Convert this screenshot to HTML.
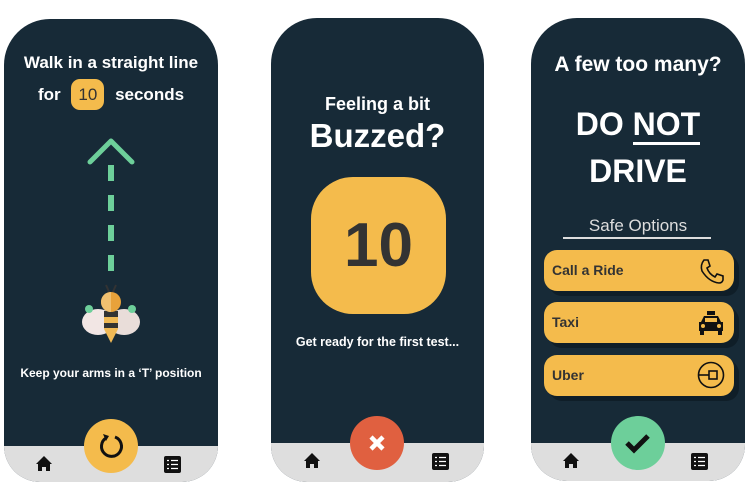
<!DOCTYPE html>
<html><head><style>
body{margin:0;width:750px;height:497px;background:#fff;position:relative;overflow:hidden;font-family:"Liberation Sans",sans-serif}
.ph{position:absolute;background:#172a37;border-radius:46px 46px 36px 36px;overflow:hidden}
.bar{position:absolute;left:0;right:0;bottom:0;background:#dedede}
.t{position:absolute;left:0;right:0;text-align:center;color:#fff;font-weight:bold}
.circ{position:absolute;width:54px;height:54px;border-radius:50%}
.btn{position:absolute;left:13px;width:190px;height:41px;background:#f4bb4c;border-radius:13px;box-shadow:5px 5px 0 #0f1e28;color:#333;font-weight:bold;font-size:14px;line-height:41px;text-indent:8px}
.btn svg{position:absolute;right:9px;top:8px}
</style></head><body>

<!-- phone 1 -->
<div class="ph" style="left:4px;top:19px;width:214px;height:463px">
<div class="t" style="top:34px;font-size:17px">Walk in a straight line</div>
<div class="t" style="top:60px;font-size:17px">for <span style="display:inline-block;background:#f4bb4c;color:#333;border-radius:9px;width:33px;height:31px;line-height:31px;font-weight:normal;margin:0 6px">10</span> seconds</div>
<svg style="position:absolute;left:0;top:0" width="214" height="463">
<polyline points="86,143 107,122 128,143" fill="none" stroke="#6dcf9a" stroke-width="5" stroke-linecap="round" stroke-linejoin="round"/>
<line x1="107" y1="146" x2="107" y2="258" stroke="#6dcf9a" stroke-width="6" stroke-dasharray="16,14"/>
<line x1="102" y1="266" x2="106" y2="275" stroke="#333" stroke-width="2"/><line x1="112" y1="266" x2="108" y2="275" stroke="#333" stroke-width="2"/>
<ellipse cx="94" cy="303" rx="16" ry="13" fill="#f2e6e4"/><ellipse cx="120" cy="303" rx="16" ry="13" fill="#e9ddd9"/>
<circle cx="85" cy="290" r="4" fill="#6dcf9a"/><circle cx="128" cy="290" r="4" fill="#6dcf9a"/>
<path d="M100,292 h14 v18 l-7,14 l-7,-14z" fill="#f0b955"/><rect x="100" y="292" width="14" height="6" fill="#333"/><rect x="100" y="304" width="14" height="5" fill="#333"/>
<circle cx="107" cy="283" r="10" fill="#e8a23a"/><path d="M107,273 a10,10 0 0 0 0,20z" fill="#f0c070"/>
</svg>
<div class="t" style="top:347px;font-size:12px">Keep your arms in a ‘T’ position</div>
<div class="bar" style="height:36px"></div>
</div>

<!-- phone 2 -->
<div class="ph" style="left:271px;top:18px;width:213px;height:464px">
<div class="t" style="top:76px;font-size:18px">Feeling a bit</div>
<div class="t" style="top:99px;font-size:33px">Buzzed?</div>
<div style="position:absolute;left:40px;top:159px;width:135px;height:137px;background:#f4bb4c;border-radius:42px;color:#333;font-weight:bold;font-size:62px;text-align:center;line-height:137px">10</div>
<div class="t" style="top:317px;font-size:12.5px">Get ready for the first test...</div>
<div class="bar" style="height:39px"></div>
</div>

<!-- phone 3 -->
<div class="ph" style="left:531px;top:18px;width:214px;height:463px">
<div class="t" style="top:35px;font-size:21px">A few too many?</div>
<div class="t" style="top:88px;font-size:32px">DO <span style="border-bottom:3px solid #fff">NOT</span></div>
<div class="t" style="top:135px;font-size:32px">DRIVE</div>
<div class="t" style="top:198px;font-size:17px;font-weight:normal;color:#ddd">Safe Options</div>
<div style="position:absolute;left:32px;top:219px;width:148px;height:2px;background:#ddd"></div>
<div class="btn" style="top:232px">Call a Ride<svg width="26" height="26" viewBox="0 0 26 26"><path d="M5,2 l4,0 2,6 -3,2 q2,6 8,9 l2,-3 6,2 0,4 q-1,3 -4,3 q-10,-1 -17,-12 q-2,-6 2,-11z" fill="none" stroke="#111" stroke-width="1.6"/></svg></div>
<div class="btn" style="top:284px">Taxi<svg width="28" height="26" viewBox="0 0 28 26"><rect x="10" y="1" width="8" height="4" fill="#111"/><path d="M4,12 l3,-6 h14 l3,6 h2 v9 h-24 v-9z" fill="#111"/><rect x="8" y="8" width="12" height="4" fill="#f4bb4c"/><circle cx="6" cy="16" r="2" fill="#f4bb4c"/><circle cx="22" cy="16" r="2" fill="#f4bb4c"/><rect x="3" y="21" width="4" height="4" fill="#111"/><rect x="21" y="21" width="4" height="4" fill="#111"/></svg></div>
<div class="btn" style="top:337px">Uber<svg width="28" height="28" viewBox="0 0 28 28" style="top:6px"><circle cx="14" cy="14" r="12.5" fill="none" stroke="#111" stroke-width="1.6"/><rect x="12" y="10" width="8" height="8" fill="none" stroke="#111" stroke-width="1.6"/><line x1="1.5" y1="14" x2="12" y2="14" stroke="#111" stroke-width="1.6"/></svg></div>
<div class="bar" style="height:38px"></div>
</div>

<!-- circles -->
<div class="circ" style="left:84px;top:419px;background:#f4bb4c"><svg width="54" height="54"><path d="M31,18 A10,10 0 1 1 22,19" fill="none" stroke="#111" stroke-width="3"/><path d="M19,15 l6,2 -3,5z" fill="#111"/></svg></div>
<div class="circ" style="left:350px;top:416px;background:#e06040"><svg width="54" height="54"><path d="M21,21 L33,33 M33,21 L21,33" stroke="#fff" stroke-width="4.5"/></svg></div>
<div class="circ" style="left:611px;top:416px;background:#6dcf9a"><svg width="54" height="54"><path d="M16,27 l7,7 l14,-14" fill="none" stroke="#111" stroke-width="5"/></svg></div>

<!-- nav icons -->
<svg style="position:absolute;left:0;top:0" width="750" height="497">
<g fill="#111">
<path d="M36,464 l8,-8 8,8 h-2 v7 h-4 v-4 h-4 v4 h-4 v-7z"/>
<path d="M304,461 l8,-8 8,8 h-2 v7 h-4 v-4 h-4 v4 h-4 v-7z"/>
<path d="M563,461 l8,-8 8,8 h-2 v7 h-4 v-4 h-4 v4 h-4 v-7z"/>
<rect x="164" y="456" width="17" height="17" rx="2"/><rect x="432" y="453" width="17" height="17" rx="2"/><rect x="691" y="453" width="17" height="17" rx="2"/>
</g>
<g stroke="#fff" stroke-width="1.3">
<path d="M167,460.5h2M171,460.5h7M167,464.5h2M171,464.5h7M167,468.5h2M171,468.5h7"/>
<path d="M435,457.5h2M439,457.5h7M435,461.5h2M439,461.5h7M435,465.5h2M439,465.5h7"/>
<path d="M694,457.5h2M698,457.5h7M694,461.5h2M698,461.5h7M694,465.5h2M698,465.5h7"/>
</g>
</svg>
</body></html>
